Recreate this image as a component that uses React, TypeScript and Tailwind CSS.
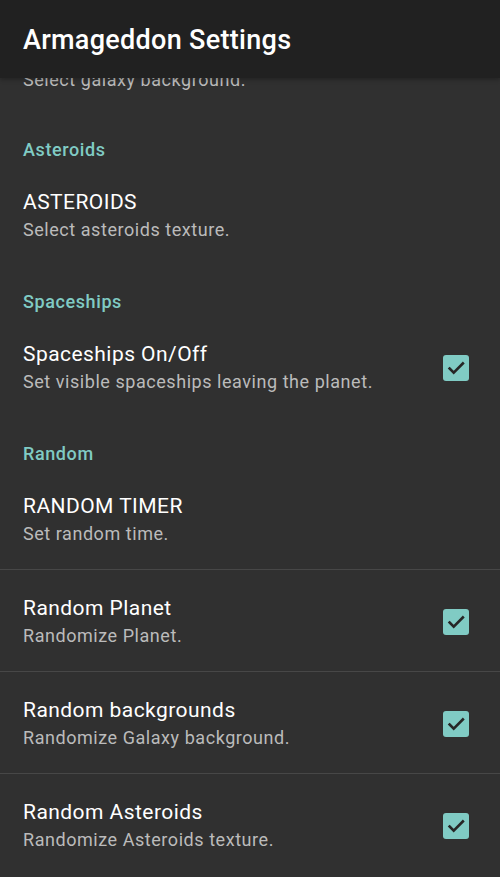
const font = { fontFamily: "Roboto, 'Noto Sans', sans-serif" };

function Check() {
  return (
    <div className="w-[26px] h-[26px] rounded-[3px] bg-[#80cbc4] flex items-center justify-center">
      <svg width="22" height="22" viewBox="0 0 24 24" fill="none">
        <path d="M5 12.5l4.5 4.5L19.5 7" stroke="#262626" strokeWidth="2.8" strokeLinecap="square" />
      </svg>
    </div>
  );
}

function Category({ label, top }: { label: string; top: string }) {
  return (
    <div className={`px-[23px] ${top} pb-[2px]`}>
      <div className="text-[18px] leading-[24px] tracking-[0.6px] font-medium text-[#80cbc4]">{label}</div>
    </div>
  );
}

function Item({ title, summary, checked, divider }: { title: string; summary: string; checked?: boolean; divider?: boolean }) {
  return (
    <div className={divider ? "border-b border-[#474747]" : ""}>
      <div className="flex items-center pl-[23px] pr-[31px] pt-[26px] pb-[23px]">
        <div className="flex-1">
          <div className="text-[21px] leading-[24px] tracking-[0.45px] text-white">{title}</div>
          <div className="text-[18px] leading-[24px] tracking-[0.55px] mt-[4px] text-[#bbbbbb]">{summary}</div>
        </div>
        {checked && <Check />}
      </div>
    </div>
  );
}

export default function App() {
  return (
    <div className="w-[500px] h-[877px] overflow-hidden bg-[#303030] flex flex-col" style={font}>
      <div className="relative z-10 h-[78px] shrink-0 bg-[#212121] flex items-center px-[23px] shadow-[0_2px_4px_rgba(0,0,0,0.25)]">
        <h1 className="text-[27px] tracking-[0.3px] font-medium text-white pt-[2px]">Armageddon Settings</h1>
      </div>
      <div className="flex flex-col">
        <div className="px-[23px] -mt-[10px] text-[18px] leading-[24px] tracking-[0.55px] text-[#bbbbbb]">Select galaxy background.</div>
        <Category label="Asteroids" top="pt-[46px]" />
        <Item title="ASTEROIDS" summary="Select asteroids texture." />
        <Category label="Spaceships" top="pt-[25px]" />
        <Item title="Spaceships On/Off" summary="Set visible spaceships leaving the planet." checked />
        <Category label="Random" top="pt-[25px]" />
        <Item title="RANDOM TIMER" summary="Set random time." divider />
        <Item title="Random Planet" summary="Randomize Planet." checked divider />
        <Item title="Random backgrounds" summary="Randomize Galaxy background." checked divider />
        <Item title="Random Asteroids" summary="Randomize Asteroids texture." checked />
      </div>
    </div>
  );
}
